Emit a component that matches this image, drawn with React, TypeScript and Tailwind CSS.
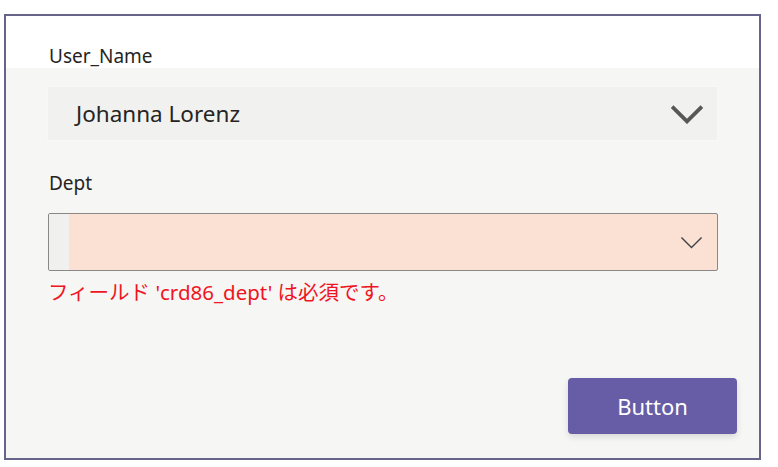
const font = { fontFamily: '"Noto Sans", "Noto Sans CJK JP", sans-serif' };

function Chevron({ className, strokeWidth }: { className: string; strokeWidth: number }) {
  return (
    <svg viewBox="0 0 32 18" className={className} fill="none">
      <path d="M2 2 L16 16 L30 2" stroke="currentColor" strokeWidth={strokeWidth} />
    </svg>
  );
}

export default function App() {
  return (
    <div className="w-[778px] h-[467px] bg-white pt-[14px] pl-[4px]" style={font}>
      <div className="w-[757px] h-[446px] border-2 border-[#67648a] flex flex-col">
        <div className="h-[52px] bg-white pl-[43px] pt-[28px]">
          <p className="text-[19px] leading-[24px] text-[#252423]">User_Name</p>
        </div>

        <div className="flex-1 bg-[#f6f6f4] flex flex-col pl-[41px]">
          <div className="mt-[18px] w-[671px] h-[55px] bg-[#f1f1f0] border border-[#f8f8f7] flex items-center justify-between pl-[28px] pr-[13px]">
            <span className="text-[22.5px] text-[#252423]">Johanna Lorenz</span>
            <Chevron className="w-[34px] h-[20px] text-[#575757]" strokeWidth={3.5} />
          </div>

          <p className="mt-[30px] ml-[2px] text-[19px] leading-[24px] text-[#252423]">Dept</p>

          <div className="mt-[18px] ml-[1px] w-[670px] h-[58px] rounded-[2px] border border-[#8a8886] bg-[#fbe0d4] flex overflow-hidden">
            <div className="w-[20px] bg-[#f0f0ef]" />
            <div className="flex-1 flex items-center justify-end pr-[14px]">
              <Chevron className="w-[23px] h-[13px] text-[#444]" strokeWidth={2} />
            </div>
          </div>

          <p className="mt-[8px] ml-[1px] text-[20.5px] leading-[26px] text-[#f0141e]">
            フィールド 'crd86_dept' は必須です。
          </p>

          <div className="flex justify-end pr-[22px] mt-auto mb-[24px]">
            <button className="w-[169px] h-[56px] rounded-[4px] bg-[#675da6] text-white text-[22px] shadow-[0_3px_6px_rgba(0,0,0,0.12)]">
              Button
            </button>
          </div>
        </div>
      </div>
    </div>
  );
}
